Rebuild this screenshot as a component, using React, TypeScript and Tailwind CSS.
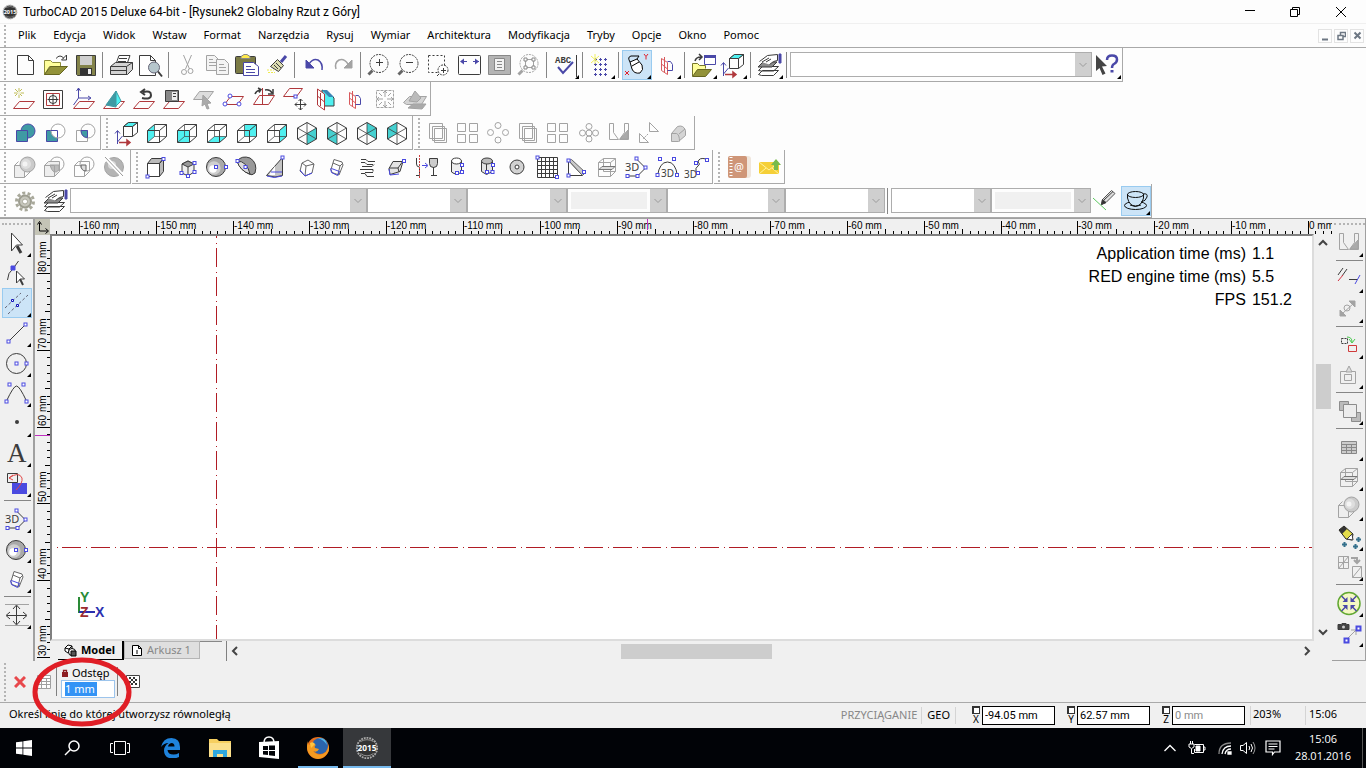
import { useState } from "react";
import type { ReactNode } from "react";

const DARK = "#3c3c3c";
const GREY = "#a3a3a3";
const BLUE = "#4a48a8";
const NODE = "#4a4ae0";
const RED = "#b0383c";
const CYAN = "#4ff0f0";
const TEAL = "#3f9aa4";

const Node = ({ x, y }: { x: number; y: number }) => (
  <rect x={x - 1.5} y={y - 1.5} width="3" height="3" fill="#fff" stroke={NODE} />
);

const cubeFaces: Record<string, string> = {
  left: "M5.500 12.500l7-6v12l-7 6z",
  front: "M5.500 12.500h12v12h-12z",
  bottom: "M5.500 24.500l7-6h12l-7 6z",
  back: "M12.500 6.500h12v12h-12z",
  right: "M17.500 12.500l7-6v12l-7 6z",
};

const Cube = ({ face }: { face: string }) => (
  <>
    <path d={cubeFaces[face]} fill={CYAN} stroke="none" />
    <path d="M5.500 12.500h12v12h-12zM5.500 12.500l7-6h12l-7 6M24.500 6.500v12l-7 6" />
    <path d="M12.500 6.500v12h12M12.500 18.500l-7 6" strokeWidth=".7" />
  </>
);

const isoFaces: Record<string, string> = {
  se: "M15 15.500l9-5.500v11l-9 5.500z",
  sw: "M15 15.500l-9-5.500v11l9 5.500z",
  ne: "M15 4.500l9 5.500v11l-9-5.500z",
  nw: "M15 4.500l-9 5.500v11l9-5.500z",
};

const Iso = ({ face }: { face: string }) => (
  <>
    <path d={isoFaces[face]} fill="#45d0d0" stroke="none" />
    <path d="M15 4.500l9.500 5.500v11l-9.500 5.500-9.500-5.500V10z" />
    <path d="M15 4.500v22M5.500 10l19 11M24.500 10l-19 11" strokeWidth=".8" />
  </>
);

const Plane = () => <path d="M3.500 24.500h15l6-7h-15z" stroke={RED} />;

const Ball = ({ cx, cy, r }: { cx: number; cy: number; r: number }) => (
  <>
    <circle cx={cx} cy={cy} r={r} fill="#a9a9a9" />
    <circle cx={cx - 2} cy={cy + 1} r={r * 0.7} fill="#cfcfcf" stroke="none" />
    <circle cx={cx - 3} cy={cy + 2} r={r * 0.4} fill="#fff" stroke="none" />
  </>
);

const Sheets = (
  <>
    <path d="M4.500 24.500l4-4h16l-5 5h-12zM4.500 20.500l4-4h16l-5 4.500h-12z" fill="#fff" />
    <path d="M4 17l5-5h14l-5 5z" fill="#8c8c8c" />
    <path d="M5.500 11.500l8-6 10-1v6l-4 1-4 3M8 12l7-4M12 12l5-3" fill="#fff" />
    <path d="M25 4h2v9h-2z" fill={BLUE} stroke={BLUE} />
  </>
);

const OriginCube = (
  <>
    <path d="M11.500 8.500h9v10h-9zM11.500 8.500l5-4h9l-5 4M25.500 4.500v10l-5 4" />
    <path d="M11.500 8.500l5-4h9l-5 4z" fill={CYAN} />
    <path d="M5.500 26V13M3 15.500l2.500-3 2.500 3M5.500 24l5-6" stroke={BLUE} />
    <path d="M7 24.500h10M15 22l3 2.500-3 2.500z" stroke={RED} fill={RED} strokeWidth="1.500" />
  </>
);

const RedPlanes = (
  <>
    <path d="M9.500 8.500v12l6 4v-12zM12.500 7v15M9.500 14l6 5" stroke="#d8585c" />
    <path d="M15.500 11.500h3l2 3v6h-5" stroke={BLUE} />
  </>
);

const Lens = ({ grey = false, children }: { grey?: boolean; children?: ReactNode }) => (
  <>
    <circle cx="15" cy="13.500" r="9" stroke={grey ? GREY : DARK} strokeDasharray="2 1" />
    <path d="M8.500 20.500l-4 4" stroke={grey ? GREY : "#666"} strokeWidth="3" />
    {children}
  </>
);

const Solid3D = (
  <g stroke={GREY}>
    <path d="M4.500 13.500h10v12h-10zM14.500 25.500l6-6M4.500 13.500l4-4" fill="#eee" />
    <circle cx="17.500" cy="12.500" r="7.500" fill="#cbcbcb" />
    <circle cx="16" cy="12" r="5" fill="#dedede" stroke="none" />
    <circle cx="15" cy="12" r="2.500" fill="#f4f4f4" stroke="none" />
  </g>
);

const Poly3D = (
  <>
    <text x="3" y="19" fontSize="11" fill={DARK} stroke="none">3D</text>
    <path d="M14.500 7l9 9-8 8h-10" />
    <Node x={14.5} y={6.500} />
    <Node x={23.5} y={15.500} />
    <Node x={15.5} y={24} />
    <Node x={5.500} y={24} />
  </>
);

const SectionBox = (
  <g stroke={GREY}>
    <path d="M6.500 10.500h12v14h-12zM6.500 10.500l5-4h12l-5 4M23.500 6.500v13l-5 5M11.500 6.500v13h12" />
    <path d="M7 17.500l3-3h13l-3 3z" fill="#ddd" stroke="#777" />
  </g>
);

const SmallBox = (
  <>
    <path d="M12 7.500l8 2.500 1 3-4 10-7-2.500-1-3z" fill="#fff" stroke="#666" />
    <path d="M11 11l7 3 3-3M18 14l-2 8" stroke="#666" />
    <path d="M8.500 16.500l1 4 6 3 2-4-8-3" stroke={NODE} />
  </>
);

const Compass = (
  <g stroke={GREY}>
    <path d="M5.500 5.500h4v9l5 7h-9z" />
    <path d="M20.500 5.500h4v16h-9l5-7z" />
    <path d="M16 21l8-9v9z" fill="#aaa" />
  </g>
);

const icons: Record<string, ReactNode> = {
  new: <path d="M7.500 5.500h11l5 5v14h-16zM18.500 5.500v5h5" />,
  open: (
    <>
      <path d="M4.500 24.500v-14h6l2 2h8v4h-11z" fill="#ffff9c" stroke="#8f8f3c" />
      <path d="M4.500 24.500l6-8h17l-8 8z" fill="#93933a" stroke="#666620" />
      <path d="M16 8.500q4-5 8 0M26.500 5v5h-5z" />
    </>
  ),
  save: (
    <>
      <path d="M6.500 5.500h19v20h-18l-1-1z" fill="#83834a" />
      <path d="M10 6h12v9H10z" fill="#cfcfcf" stroke="none" />
      <path d="M10 18h12v7H10z" fill="#333" stroke="none" />
      <path d="M18 19h3v5h-3z" fill="#eee" stroke="none" />
    </>
  ),
  print: (
    <>
      <path d="M10 14l3-8.500h11l-3 8.500" fill="#fff" />
      <path d="M13 8.500h8M12 11.500h8" />
      <path d="M4.500 16.500l5-4h17v7l-5 5h-17z" fill="#d2d2d2" />
      <path d="M4.500 16.500h16l6-4M4.500 20.500h16M20.500 16.500v8" />
    </>
  ),
  preview: (
    <>
      <path d="M3.500 5.500h11l5 5v15h-16zM14.500 5.500v5h5" fill="#fff" />
      <circle cx="18" cy="17.500" r="5.500" fill="#b6c6cc" stroke="#667" />
      <path d="M22 21.500l4 5" strokeWidth="2" />
    </>
  ),
  cut: (
    <g stroke={GREY}>
      <path d="M11.500 5l6 14M19.500 5l-6 14" />
      <circle cx="12" cy="22" r="2.500" />
      <circle cx="18.500" cy="21" r="2.500" />
    </g>
  ),
  copy: (
    <g stroke={GREY}>
      <path d="M4.500 5.500h8l4 4v11h-12z" fill="#f4f4f4" />
      <path d="M7 9.500h4M7 12.500h7M7 15.500h7" />
      <path d="M14.500 9.500h8l4 4v11h-12z" fill="#f4f4f4" />
      <path d="M17 14.500h5M17 17.500h7M17 20.500h7" />
    </g>
  ),
  paste: (
    <>
      <rect x="3.500" y="6.500" width="20" height="17" rx="1" fill="#7b7b45" />
      <path d="M9 6.500l3-2h3l3 2v2H9z" fill="#ffe94a" stroke="#888" />
      <path d="M11.500 12.500h10l5 4v9h-15z" fill="#fff" stroke={BLUE} />
      <path d="M14 16.500h5M14 19.500h9M14 22.500h9" stroke={BLUE} />
    </>
  ),
  brush: (
    <>
      <path d="M19 12l5-6" stroke={BLUE} strokeWidth="3" />
      <path d="M15.500 9.500l6 6-5 6-8-5z" fill="#dcdcb0" />
      <path d="M14 13l5 5M12 15l4 4" />
      <path d="M5 20h7M6 22.500h7" stroke="#eeea50" strokeDasharray="2 1" />
    </>
  ),
  undo: (
    <g stroke={BLUE}>
      <path d="M11 14q4-6 9-4 5 3 4 10" strokeWidth="1.500" />
      <path d="M8 10v8h8z" fill={BLUE} />
    </g>
  ),
  redo: (
    <g stroke={GREY}>
      <path d="M20 14q-4-6-9-4-5 3-3 9" strokeWidth="1.500" />
      <path d="M24 10v8h-8z" fill={GREY} />
    </g>
  ),
  zoomIn: <Lens><path d="M12 12.500h7M15.500 9v7" /></Lens>,
  zoomOut: <Lens><path d="M12 12.500h7" /></Lens>,
  zoomWindow: (
    <>
      <path d="M4.500 5.500h16v17h-16z" strokeDasharray="2 2" />
      <circle cx="19" cy="20" r="5" fill="#fff" strokeDasharray="2 1" />
      <path d="M17 20.500h5M19.500 18v5M15 24l-2 2" />
    </>
  ),
  extents: (
    <>
      <rect x="4.500" y="5.500" width="22" height="19" rx="1" />
      <path d="M7 11.500h6M25 11.500h-6" stroke={BLUE} />
      <path d="M6 11.500l4-3v6zM25 11.500l-4-3v6z" fill={BLUE} stroke="none" />
    </>
  ),
  page: (
    <g stroke="#888">
      <path d="M4.500 5.500h22v19h-22z" fill="#b4b4b4" />
      <path d="M10.500 8.500h10v12h-10z" fill="#f2f2f2" />
      <path d="M13 11.500h5M13 14.500h5M13 17.500h5" />
    </g>
  ),
  zoomSelection: (
    <Lens grey>
      <path d="M11.500 9.500h8v8h-8z" stroke={GREY} />
      <path d="M10 8h3v3h-3zM18 8h3v3h-3zM10 16h3v3h-3zM18 16h3v3h-3z" stroke="#888" fill="#fff" />
    </Lens>
  ),
  spelling: (
    <>
      <text x="5" y="13" fontSize="9" fontWeight="700" fill={DARK} stroke="none" className="font-['Liberation_Mono',monospace]">ABC</text>
      <path d="M8 17l5 6 10-11" stroke={BLUE} strokeWidth="2" />
      <path d="M26.500 5v22" />
    </>
  ),
  grid: (
    <>
      {[9, 14, 19, 24].map((y) => (
        <path key={y} d={`M8 ${y}.500h3M13 ${y}.500h3M18 ${y}.500h3M9.500 ${y - 1}v3M14.500 ${y - 1}v3M19.500 ${y - 1}v3`} stroke={BLUE} />
      ))}
      <path d="M5 6l8 7M5 13l8-7M9 4v10" stroke="#f2f060" />
    </>
  ),
  noSnap: (
    <>
      <path d="M8 12l7-3 5 6q2 5-2 8-6 1-8-4z" fill="#fff" stroke="#000" />
      <path d="M10 16l7-4M8 12q-3-5 1-6h8l-2 3" stroke="#000" />
      <path d="M3 21l4 4M7 21l-4 4M22 4l2 2.500 2-2.500M24 6.500v3" stroke="#e0202c" />
    </>
  ),
  workplane: RedPlanes,
  openLayout: (
    <>
      <path d="M4.500 26V13.500h5l2 2h6v3" fill="#ffff9c" stroke="#77772c" />
      <path d="M4.500 26.500l5-7h14l-6 7z" fill="#93933a" stroke="#666620" />
      <path d="M16.500 5.500h11v9h-11z" fill="#fff" stroke={BLUE} />
      <path d="M16 5h12v3H16z" fill={BLUE} stroke="none" />
      <path d="M7 11q1-4 6-4M11 4l3 3-3 3" strokeWidth="1.500" />
    </>
  ),
  originCube: OriginCube,
  sheets: Sheets,
  help: (
    <>
      <path d="M4 5l11 11-5 .500 3.500 7-3 1.500-3-7L4 21z" fill="#444" stroke="none" />
      <path d="M15 10q0-4.500 5-4.500t5 4q0 3-3 4.500-2 1-2 4" stroke={BLUE} strokeWidth="2.500" />
      <path d="M18.500 20h3v2.500h-3z" fill={BLUE} stroke="none" />
    </>
  ),

  planeNew: (
    <>
      <Plane />
      <path d="M9 4v10M4 9h10M5 5l7 7M12 5l-7 7" stroke="#c0bd58" />
      <path d="M9 7v4M7 9h4" stroke="#fff" />
    </>
  ),
  planeView: (
    <>
      <path d="M3.500 6.500h19v18h-19z" />
      <path d="M6.500 9.500h13v12h-13z" stroke={RED} />
      <circle cx="13" cy="15.500" r="4" />
      <path d="M13 10v11M7.500 15.500h11" />
    </>
  ),
  planeAxes: (
    <>
      <Plane />
      <path d="M8.500 4v10h12M8.500 14l-5 7M6.500 7l2-3 2 3M18 12l3 2-3 2" stroke={BLUE} />
    </>
  ),
  planeFacet: (
    <>
      <Plane />
      <path d="M6 21l10-14v16z" fill={TEAL} stroke={TEAL} />
      <path d="M16 7l5 10-5 5z" fill={CYAN} stroke={TEAL} />
    </>
  ),
  planeBack: (
    <>
      <Plane />
      <path d="M12 14q9 2 9-3t-8-3M15 5l-4 3 4 3" strokeWidth="2" />
    </>
  ),
  planeNamed: (
    <>
      <Plane />
      <path d="M5.500 6.500h13v11h-13z" fill="#888" />
      <path d="M12 8h5v8h-5z" fill="#eee" stroke="none" />
      <path d="M13 9.500h3M13 12.500h3" />
    </>
  ),
  planeSelect: (
    <g stroke={GREY}>
      <path d="M3.500 15.500l6-8h14l-6 8z" fill="#ddd" />
      <path d="M13 11l8 8-4 .500 2 5-2 .500-2-5-3 2z" fill="#aaa" />
    </g>
  ),
  planePoints: (
    <>
      <path d="M4.500 20.500h13l6-8h-13z" stroke={RED} />
      <circle cx="10" cy="12" r="2" fill="#fff" stroke={NODE} />
      <circle cx="5" cy="20" r="2" fill="#fff" stroke={NODE} />
      <circle cx="19" cy="20" r="2" fill="#fff" stroke={NODE} />
    </>
  ),
  planeRotate: (
    <>
      <path d="M3.500 20.500h15l6-9h-15z" stroke={RED} />
      <path d="M12.500 4v16" stroke={RED} />
      <path d="M5 10q1-3 5-4M15 6q5-1 7 3M8 4l3 1.500-2 3M23 5v5h-5" strokeWidth="1.500" />
    </>
  ),
  planeMove: (
    <>
      <path d="M3.500 12.500h13l6-8h-13z" stroke={RED} />
      <Node x={15.500} y={12.500} />
      <path d="M20.500 15v11M15 20.500h11M18.500 17l2-2 2 2M18.500 24l2 2 2-2M17 18.500l-2 2 2 2M24 18.500l2 2-2 2" />
    </>
  ),
  planeObject: (
    <>
      <path d="M12 6l7 3 5 5v8H12z" fill={CYAN} />
      <path d="M12 6h5l7 7h-5z" fill="#3a86b4" stroke="none" />
      <path d="M7.500 5v16l7 5V10z" fill="#fff" stroke={RED} />
      <path d="M10.500 9v13M7.500 12l7 6" stroke={RED} />
    </>
  ),
  planeFaces: RedPlanes,
  fit: (
    <g stroke={GREY}>
      <path d="M6.500 6.500h17v17h-17z" strokeDasharray="3 1" />
      <path d="M15 7v6M15 17v6M7 15h6M17 15h6M13 9l2-2 2 2M13 21l2 2 2-2M9 13l-2 2 2 2M21 13l2 2-2 2M9 9l3 3M21 9l-3 3M9 21l3-3M21 21l-3-3" />
    </g>
  ),
  render: (
    <g stroke={GREY}>
      <path d="M3.500 18.500l6-6h17l-5 8h-15z" fill="#d4d4d4" />
      <path d="M9 17l6-10 6 7-4 4z" fill="#bbb" />
      <path d="M8 24l5-4h13l-4 5z" fill="#aaa" />
    </g>
  ),

  union: (
    <g stroke={BLUE}>
      <circle cx="18" cy="13" r="7" fill={TEAL} />
      <path d="M6.500 12.500h11v11h-11z" fill={TEAL} />
    </g>
  ),
  subtract: (
    <>
      <path d="M6.500 12.500h11v11h-11z" fill={TEAL} stroke={BLUE} />
      <circle cx="18" cy="13" r="7" fill="#fff" stroke={GREY} />
      <path d="M11 12.500h6.500v7" stroke={BLUE} />
    </>
  ),
  intersect: (
    <>
      <path d="M6.500 12.500h11v11h-11z" stroke={GREY} />
      <circle cx="18" cy="13" r="7" stroke={GREY} />
      <path d="M11 12.500h6.500v7q-6 0-6.500-7z" fill={TEAL} stroke={BLUE} />
    </>
  ),
  cubeLeft: <Cube face="left" />,
  cubeFront: <Cube face="front" />,
  cubeBottom: <Cube face="bottom" />,
  cubeBack: <Cube face="back" />,
  cubeRight: <Cube face="right" />,
  isoSE: <Iso face="se" />,
  isoSW: <Iso face="sw" />,
  isoNE: <Iso face="ne" />,
  isoNW: <Iso face="nw" />,
  copyStack: <path d="M5.500 5.500h13v15h-13zM8.500 8.500h12v14h-12zM10.500 10.500h12v14h-12z" stroke={GREY} />,
  copyArray: <path d="M3.500 5.500h8v8h-8zM15.500 5.500h8v8h-8zM3.500 16.500h8v8h-8zM15.500 16.500h8v8h-8z" stroke={GREY} />,
  copyRadial: (
    <g stroke={GREY}>
      <circle cx="14" cy="7.500" r="3" /><circle cx="14" cy="22" r="3" /><circle cx="6.500" cy="14.500" r="3" /><circle cx="21.500" cy="14.500" r="3" />
    </g>
  ),
  copyFlower: (
    <g stroke={GREY}>
      <circle cx="15" cy="8.500" r="3" /><circle cx="15" cy="21" r="3" /><circle cx="8.500" cy="15" r="3" /><circle cx="21.500" cy="15" r="3" /><circle cx="15" cy="15" r="3" />
    </g>
  ),
  compass: Compass,
  mirror: (
    <g stroke={GREY}>
      <path d="M15.500 4.500v9h9zM5.500 15.500v9h9z" />
      <path d="M14 16l-5 5" strokeDasharray="2 1" />
    </g>
  ),
  bevel: (
    <g stroke={GREY}>
      <path d="M7.500 15.500l6-7q6-2 8 4v5l-7 6h-7z" fill="#d5d5d5" />
      <path d="M7.500 15.500h5q3 1 3 8M15 16l6-5" />
    </g>
  ),

  solid: Solid3D,
  solidCut: (
    <g stroke={GREY}>
      <circle cx="17" cy="12" r="7" />
      <path d="M4.500 13.500l4-4h11v10l-5 5h-10z" fill="#eee" />
      <path d="M10 13h9v5q-6 6-9-5z" fill="#bbb" />
      <path d="M4.500 13.500h10v11" />
    </g>
  ),
  solidCommon: (
    <g stroke={GREY}>
      <circle cx="17" cy="12" r="7" />
      <path d="M4.500 13.500l4-4h11v10l-5 5h-10zM4.500 13.500h10v11" />
      <path d="M11 13h5v6q-5 0-5-6z" fill="#ddd" stroke="#666" />
    </g>
  ),
  slice: (
    <>
      <circle cx="14" cy="15" r="9.500" fill="#b4b4b4" stroke={GREY} />
      <circle cx="12" cy="13" r="4" fill="#d8d8d8" stroke="none" />
      <path d="M5 5l18 19" stroke="#fff" strokeWidth="4" />
      <path d="M5 5l18 19" stroke="#999" />
    </>
  ),
  box: (
    <>
      <path d="M5.500 11.500h12v13h-12z" fill="#fff" />
      <path d="M5.500 11.500l4-5h12l-4 5zM17.500 11.500l4-5v13l-4 5z" fill="#bbb" />
      <Node x={5.500} y={24.500} /><Node x={21.500} y={7} />
    </>
  ),
  boxCenter: (
    <>
      <path d="M10 12l6-3 6 3v8l-6 4-6-3z" fill="#eee" />
      <path d="M10 12l6-3 6 3-6 3z" fill="#999" />
      <path d="M16 15v9" />
      <Node x={9.500} y={21} /><Node x={16} y={24} /><Node x={22.500} y={20} /><Node x={22.500} y={11} />
    </>
  ),
  sphere: (
    <>
      <Ball cx={14} cy={15} r={9.500} />
      <Node x={14} y={15} /><Node x={24} y={15} />
    </>
  ),
  hemisphere: (
    <>
      <path d="M5 9q5-6 13-3 8 5 5 15-3 3-6 1-9-4-12-13z" fill="#999" />
      <path d="M5 9q10 0 13 13-10-3-13-13z" fill="#ddd" />
      <Node x={5.500} y={9} /><Node x={13.500} y={15} />
    </>
  ),
  cone: (
    <>
      <path d="M4.500 23.500l16-18v18q-7 3-16 0z" fill="#c4c4c4" />
      <path d="M13 14l-6 9h6z" fill="#fff" stroke="none" />
      <path d="M5 24q7 3 15 0M9 20h11" stroke={NODE} />
      <Node x={20.500} y={5.500} />
    </>
  ),
  prism: (
    <>
      <path d="M10 11l6-3 6 4-2 9-7 3-5-5z" fill="#fff" stroke="#666" />
      <path d="M10 11l4 3 8-2M14 14l-1 10" stroke="#666" />
      <path d="M8 18l5 6 7-3" stroke={NODE} />
    </>
  ),
  smallBox: SmallBox,
  pipes: <path d="M9 7.500h5l2 2h7M9 10.500h4l2 2h6M10 14.500h10l2-2M8 17.500h13v2M9 21.500h4l2 3h7M13 20.500h8" />,
  slab: (
    <>
      <path d="M11 9.500h10l-3 10-10 3-1-6z" fill="#e4e4e4" />
      <path d="M7 16h9l5-7M16 16l1 4" />
      <path d="M7 17l1 6 9-1" stroke={NODE} />
      <Node x={22} y={9} />
    </>
  ),
  revolve: (
    <>
      <path d="M4.500 6v6q0 3 3 3v8.500H4" />
      <path d="M17.500 6.500h8v5q0 4-4 4t-4-4zM21.500 15v8M19 23.500h6" fill="#ccc" />
      <path d="M7.500 3v24" stroke="#d04040" strokeDasharray="2 1" />
      <path d="M10 13.500h5M13 11l3 2.500-3 2.500" stroke={NODE} />
    </>
  ),
  cylinder: (
    <>
      <path d="M9.500 9v11q5 4 10 0V9" fill="#eee" />
      <ellipse cx="14.500" cy="9" rx="5" ry="3" fill="#fff" />
      <Node x={20} y={13} /><Node x={20} y={20} /><Node x={15} y={21} />
    </>
  ),
  tube: (
    <>
      <path d="M9.500 9.500v10l5 3 6-3v-10" fill="#e4e4e4" />
      <ellipse cx="15" cy="9" rx="5.500" ry="3" fill="#bbb" />
      <path d="M14.500 12v10" />
      <Node x={21} y={13} /><Node x={20.500} y={20} /><Node x={15} y={20} />
    </>
  ),
  torus: (
    <>
      <circle cx="15" cy="15" r="7" fill="#d2d2d2" />
      <circle cx="15" cy="15" r="2" fill="#fff" />
    </>
  ),
  mesh: (
    <>
      <path d="M5.500 5.500h20v20h-20zM9.500 5v20M13.500 5v20M17.500 5v20M21.500 5v20M5 9.500h20M5 13.500h20M5 17.500h20M5 21.500h20" />
      <Node x={5.500} y={5.500} /><Node x={25} y={25} />
    </>
  ),
  wedge: (
    <>
      <path d="M6.500 8.500v15h14z" fill="#fff" />
      <path d="M6.500 8.500l3-1 14 13-3 3z" fill="#c9c9c9" stroke="#666" />
      <Node x={6.500} y={8.500} /><Node x={6.500} y={23.500} /><Node x={22} y={20} />
    </>
  ),
  sectionBox: SectionBox,
  poly3d: Poly3D,
  arc3d: (
    <>
      <path d="M5.500 24q2-14 10-14t10 14" />
      <text x="9" y="25" fontSize="10" fill={DARK} stroke="none">3D</text>
      <Node x={8} y={7} /><Node x={22} y={7} /><Node x={5.500} y={23} /><Node x={25} y={23} />
    </>
  ),
  spline3d: (
    <>
      <path d="M14 19q-1-3 2-5t0-4q1-5 8-3" />
      <text x="2" y="26" fontSize="10" fill={DARK} stroke="none">3D</text>
      <Node x={14} y={11} /><Node x={25} y={8} /><Node x={16} y={21} />
    </>
  ),
  addressBook: (
    <g stroke="none">
      <rect x="4" y="4" width="23" height="22" rx="3" fill="#f0e6dc" />
      <rect x="4" y="4" width="19" height="22" rx="2" fill="#cf9678" />
      <path d="M7 5v20" stroke="#fff" strokeDasharray="1 2" strokeWidth="3" />
      <text x="10" y="19" fontSize="11" fill="#fff">@</text>
    </g>
  ),
  mailUp: (
    <>
      <path d="M5 10h20v12H5z" fill="#f5cf37" stroke="none" />
      <path d="M5 10l10 8 10-8M5 22l7-6M25 22l-7-6" stroke="#fff3a0" />
      <path d="M22 7l5 6h-3v5h-4v-5h-3z" fill="#78bb4c" stroke="none" />
    </>
  ),

  gear: (
    <>
      <circle cx="15" cy="15.500" r="8.500" stroke="#a8a89a" strokeWidth="3" strokeDasharray="3 2.300" />
      <circle cx="15" cy="15.500" r="6" fill="#c7c7bd" stroke="#9d9d90" strokeWidth="2" />
      <circle cx="15" cy="15.500" r="2.500" fill="#fff" stroke="#a8a89a" />
    </>
  ),
  pencil: (
    <>
      <path d="M2 12l13 12" stroke="#5cc860" />
      <path d="M10.500 18.500l1-5 9-9 3.500 3-9 9z" fill="#ddd" stroke="#555" />
      <path d="M10.500 18.500l1-5 3.500 3zM13 14l9-8.500" fill="#333" />
    </>
  ),
  cup: (
    <g stroke="#111">
      <ellipse cx="14.500" cy="19.500" rx="11" ry="4" />
      <path d="M6.500 8v4q2 8 8 8t8-8V8" fill="#cce4f7" />
      <ellipse cx="14.500" cy="8.500" rx="8" ry="3" />
      <path d="M22 8q5-1 4 3t-6 5M9 19q5 3 11 0" />
    </g>
  ),

  arrow: (
    <>
      <path d="M9.500 5v18l5-6h6z" fill="#fff" />
      <path d="M15 18l4 7" strokeWidth="3" />
    </>
  ),
  nodeEdit: (
    <>
      <path d="M5.500 22q0-7 6-12l5-7" />
      <path d="M9 8h4v4H9z" fill={NODE} stroke={NODE} />
      <path d="M14.500 13v12l4-4h4z" fill="#fff" />
      <path d="M18 21l3 6" strokeWidth="2" />
    </>
  ),
  parallel: (
    <>
      <path d="M3 20L19 5M6 26L26 7" strokeDasharray="3 2" stroke="#667" />
      <path d="M9.500 11.500h2v2h-2zM14.500 16.500h2v2h-2z" stroke="#1010b8" fill="#fff" />
    </>
  ),
  line: (
    <>
      <path d="M6.500 23.500l17-17" />
      <Node x={6.500} y={23.500} /><Node x={23.500} y={6.500} />
    </>
  ),
  circle: (
    <>
      <circle cx="14.500" cy="15.500" r="10" />
      <Node x={14.500} y={15.500} /><Node x={24.500} y={15.500} />
    </>
  ),
  arc: (
    <>
      <path d="M4.500 23q7-15 10-15t10 15" />
      <Node x={7.500} y={6.500} /><Node x={21.500} y={6.500} /><Node x={4.500} y={23.500} /><Node x={24.500} y={23.500} />
    </>
  ),
  point: <circle cx="15" cy="14" r="2" fill={DARK} stroke="none" />,
  text: <text x="5" y="24" fontSize="27" fill={DARK} stroke="none" className="font-['Liberation_Serif',serif]">A</text>,
  substitute: (
    <>
      <path d="M5.500 5.500h10v9h-10z" />
      <path d="M10 15h15v11H10z" fill={NODE} stroke="none" />
      <path d="M7 10q10-7 13 0 1 5-6 12M11 7l-4 3 4 2" stroke="#e04848" />
    </>
  ),
  ball: (
    <>
      <Ball cx={14} cy={16} r={9.500} />
      <Node x={14} y={16} /><Node x={24} y={16} />
    </>
  ),
  move: (
    <>
      <path d="M3 4.500h24M3 25.500h24" stroke={GREY} />
      <path d="M14.500 6v18M5 15.500h19M11 9l3.500-4 3.500 4M11 21l3.500 4 3.500-4M8 12l-4 3.500 4 3.500M21 12l4 3.500-4 3.500" />
    </>
  ),

  trim: (
    <>
      <path d="M4 11l5-7M8 12l5-7" />
      <path d="M4 17l5-6" stroke="#d03040" />
      <path d="M15 15.500h8" />
      <path d="M21 20l5-9" stroke={NODE} />
    </>
  ),
  extend: (
    <g stroke={GREY}>
      <path d="M8 20l12-11" />
      <path d="M6 16v6h6zM15 7h6v6z" fill={GREY} />
      <circle cx="13" cy="14" r="3" />
    </g>
  ),
  group: (
    <>
      <path d="M7.500 8.500h6v5h-6z" strokeDasharray="2 1" />
      <path d="M13 7q5 0 5 5M15 9l3 4 3-4" stroke="#45c84a" />
      <path d="M14.500 15.500h8v6h-8z" stroke="#d03a3a" />
    </>
  ),
  lockGroup: (
    <g stroke={GREY}>
      <path d="M6.500 11.500h15v12h-15zM10.500 14.500h7v6h-7z" />
      <path d="M12 12l3-6 3 6z" fill="#ddd" />
    </g>
  ),
  arrange: (
    <g stroke="#8c8c8c">
      <path d="M5.500 5.500h9v9h-9zM17.500 16.500h9v9h-9z" fill="#bbb" />
      <path d="M9.500 8.500h13v13h-13z" fill="#ececec" />
    </g>
  ),
  table: (
    <g stroke="#888">
      <path d="M7.500 9.500h15v12h-15z" fill="#ccc" />
      <path d="M7 12.500h16M7 15.500h16M7 18.500h16M12.500 12v9M17.500 12v9" />
    </g>
  ),
  marker: (
    <>
      <path d="M5 8l5-4 9 8-1 6-6-1z" fill="#e3dc4a" stroke="#222" />
      <path d="M5 8l5-4 3 3-5 5z" fill="#333" stroke="none" />
      <path d="M13 17l5-5 1 6z" fill="#fff" />
      <path d="M8 22.500h5M10.500 20v5M22 17.500h5M24.500 15v5M19 24.500h5M21.500 22v5" stroke="#35708c" strokeWidth="2" />
    </>
  ),
  blocks: (
    <g stroke={GREY}>
      <path d="M4.500 4.500h10v12h-10zM9.500 4.500v12M4.500 10.500h10M4.500 16.500l10-12M18.500 14.500h9v11h-9zM18.500 25.500l9-11" />
      <path d="M17 6h6v4M20 8l3 3 3-3" strokeWidth="2" />
    </g>
  ),
  collapse: (
    <>
      <circle cx="15" cy="15.500" r="11" fill="#f4f8c4" stroke="#62a832" strokeWidth="1.500" />
      <path d="M7.500 8l5 5M22.500 8l-5 5M7.500 23l5-5M22.500 23l-5-5" stroke={BLUE} strokeWidth="1.500" />
      <path d="M13.500 9v5h-5zM16.500 9v5h5zM13.500 22v-5h-5zM16.500 22v-5h5z" fill={BLUE} stroke="none" />
    </>
  ),
  camera: (
    <>
      <path d="M4 6.500h3l1-1h4l1 1h2v5H4z" fill="#444" />
      <circle cx="9.500" cy="9" r="1.500" fill="#ccc" stroke="none" />
      <path d="M14 20l8-8M17 12h5v5" stroke={GREY} />
      <path d="M10.500 20.500h4v4h-4zM22.500 8.500h4v4h-4z" fill="#fff" stroke={NODE} strokeWidth="2" />
    </>
  ),
};

// "|" marks a separator, a trailing "*" a button with a flyout corner
const standardBar = [
  "new", "open", "save", "|", "print", "preview", "|", "cut", "copy", "paste", "brush", "|", "undo", "redo", "|",
  "zoomIn", "zoomOut", "zoomWindow", "extents", "page", "zoomSelection", "|", "spelling*", "|", "grid*", "|",
  "noSnap*", "workplane*", "|", "openLayout*", "originCube*", "|", "sheets*", "|",
];
const planeBar = [
  "planeNew", "planeView", "planeAxes", "planeFacet", "planeBack", "planeNamed", "planeSelect", "planePoints",
  "planeRotate", "planeMove", "planeObject", "planeFaces", "fit", "render",
];
const booleanBar = ["union", "subtract", "intersect"];
const viewBar = [
  "originCube", "cubeLeft", "cubeFront", "cubeBottom", "cubeBack", "cubeRight", "isoSE", "isoSW", "isoNE", "isoNW",
];
const copyBar = ["copyStack", "copyArray", "copyRadial", "copyStack", "copyArray", "copyFlower", "compass", "mirror", "bevel"];
const solidBar = ["solid", "solidCut", "solidCommon", "slice"];
const shapeBar = [
  "box", "boxCenter", "sphere", "hemisphere", "cone", "prism", "smallBox", "pipes", "slab", "revolve", "cylinder",
  "tube", "torus", "mesh", "wedge", "sectionBox", "poly3d", "arc3d", "spline3d",
];
const leftBar = [
  "arrow*", "nodeEdit", "parallel*", "line*", "circle*", "arc*", "point*", "text*", "substitute*", "|", "poly3d*",
  "ball*", "smallBox*", "|", "move*",
];
const rightBar = [
  "compass*", "|", "trim*", "extend*", "|", "group*", "lockGroup*", "|", "arrange*", "|", "table*", "sectionBox*",
  "solid*", "marker*", "blocks*", "|", "collapse*", "camera*",
];

const menus = [
  "Plik", "Edycja", "Widok", "Wstaw", "Format", "Narzędzia", "Rysuj", "Wymiar", "Architektura", "Modyfikacja",
  "Tryby", "Opcje", "Okno", "Pomoc",
];

const ToolButton = ({ id, active = false }: { id: string; active?: boolean }) => {
  const name = id.replace("*", "");
  return (
    <button
      type="button"
      aria-label={name}
      className={`block size-[30px] shrink-0 ${active ? "bg-[#cce4f7] outline -outline-offset-1 outline-[#99cbf0]" : ""}`}
    >
      <svg viewBox="0 0 30 30" className="size-[30px]" fill="none" stroke={DARK}>
        {icons[name]}
        {id.endsWith("*") && <path d="M29 25v4h-4z" fill="#000" stroke="none" />}
      </svg>
    </button>
  );
};

const Tools = ({ items, active, vertical = false }: { items: string[]; active?: string; vertical?: boolean }) => (
  <>
    {items.map((item, i) =>
      item === "|" ? (
        <span
          key={i}
          className={vertical ? "mx-0.5 mt-[2px] mb-[3px] block border-t border-[#868686]" : "mr-[3px] ml-[2px] h-[26px] border-l border-[#868686]"}
        />
      ) : (
        <ToolButton key={i} id={item} active={active !== undefined && item.startsWith(active)} />
      )
    )}
  </>
);

const ToolBar = ({ children }: { children: ReactNode }) => (
  <div role="toolbar" className="flex h-[34px] items-center border-r border-b border-[#a9a9a9]">
    <span className="mr-1 ml-1 h-[30px] border-l-2 border-dotted border-[#b4b4b4]" />
    {children}
  </div>
);

const Combo = ({ label, className, muted = false }: { label: string; className: string; muted?: boolean }) => (
  <div className={`flex h-[25px] border border-[#adadad] ${className}`}>
    <select aria-label={label} disabled className={`min-w-0 flex-1 appearance-none ${muted ? "m-[3px] bg-[#f0f0f0]" : "bg-white"}`} />
    <span className="flex w-4 items-center justify-center bg-[#cfcfcf]">
      <svg viewBox="0 0 8 6" className="h-1.5 w-2" fill="none" stroke="#9a9a9a"><path d="M.5 1L4 4.500 7.500 1" /></svg>
    </span>
  </div>
);

const STEP = 7.68;

const HorizontalRuler = () => (
  <svg className="block h-[15px] w-full bg-[#f0f0f0]" shapeRendering="crispEdges">
    {Array.from({ length: 260 }, (_, i) => {
      const mm = i - 163;
      const x = Math.round(29 + (i - 3) * STEP);
      const major = mm % 10 === 0;
      const top = major ? 2 : mm % 5 === 0 ? 10 : 12;
      return (
        <g key={i}>
          <rect x={x} y={top} width="1" height={15 - top} />
          {major && mm <= 0 && <text x={x + 1} y="10" fontSize="10">{`${mm} mm`}</text>}
        </g>
      );
    })}
    <rect x="597" y="0" width="1" height="11" fill="#c030c0" />
  </svg>
);

const VerticalRuler = () => (
  <div className="relative min-h-0 flex-1">
    <svg className="absolute inset-0 size-full bg-[#f0f0f0]" shapeRendering="crispEdges">
      {Array.from({ length: 140 }, (_, i) => {
        const mm = 83 - i;
        const y = Math.round(38 + (i - 3) * STEP);
        const major = mm % 10 === 0;
        const left = major ? 2 : mm % 5 === 0 ? 10 : 12;
        return (
          <g key={i}>
            <rect x={left} y={y} width={15 - left} height="1" />
            {major && mm >= 30 && (
              <text fontSize="10" transform={`translate(11 ${y - 1}) rotate(-90)`}>{`${mm} mm`}</text>
            )}
          </g>
        );
      })}
      <rect x="0" y="200" width="15" height="1" fill="#c030c0" />
    </svg>
  </div>
);

const Drawing = () => (
  <svg className="absolute inset-0 size-full" fill="none">
    <g stroke="#b01c24" shapeRendering="crispEdges">
      <line x1="164.500" y1="0" x2="164.500" y2="100%" strokeDasharray="19 5 1 4" strokeDashoffset="17" />
      <line x1="5" y1="311.500" x2="100%" y2="311.500" strokeDasharray="1 4 19 5" />
    </g>
    <path d="M27 361v16" stroke="#2a8a36" strokeWidth="2" />
    <path d="M27 376h16" stroke="#2a30b0" strokeWidth="2" />
    <g fontSize="14" fontWeight="700" className="font-['Liberation_Sans',sans-serif]">
      <text x="28" y="366" fill="#2a8a36">Y</text>
      <text x="28" y="381" fill="#9c2c30">Z</text>
      <text x="43" y="381" fill="#2a30b0">X</text>
    </g>
  </svg>
);

const stats = [
  ["Application time (ms)", "1.1"],
  ["RED engine time (ms)", "5.5"],
  ["FPS", "151.2"],
];

const Chevron = ({ className }: { className: string }) => (
  <svg viewBox="0 0 10 10" className={`size-2.5 ${className}`} fill="none" stroke="#444" strokeWidth="2"><path d="M1 7l4-4 4 4" /></svg>
);

const Coordinate = ({ axis, value, muted = false }: { axis: string; value: string; muted?: boolean }) => {
  const [text, setText] = useState(value);
  return (
    <div className="flex gap-0.5">
      <div className="flex flex-col items-center">
        <input type="checkbox" aria-label={`Zablokuj ${axis}`} className="size-2 appearance-none border border-l-2 border-t-2 border-[#333] bg-white" />
        <label htmlFor={`axis-${axis}`} className="text-[10px] leading-[11px]">{axis}</label>
      </div>
      <input
        id={`axis-${axis}`}
        value={text}
        onChange={(e) => setText(e.target.value)}
        className={`h-[19px] w-[73px] border border-black bg-white px-0.5 font-['Roboto',sans-serif] text-[11px] ${muted ? "text-[#8a8a8a]" : ""}`}
      />
    </div>
  );
};

const Badge = ({ className }: { className: string }) => (
  <svg viewBox="0 0 26 26" className={className}>
    <circle cx="13" cy="13" r="11" fill="#333" stroke="#aaa" strokeWidth="2" strokeDasharray="2 1" />
    <path d="M6 19q7 5 14 0M6 6q7-4 14 0" stroke="#999" fill="none" />
    <text x="13" y="16" textAnchor="middle" fontSize="9" fontWeight="700" fill="#fff">2015</text>
  </svg>
);

const TaskButton = ({ label, className = "", children }: { label: string; className?: string; children: ReactNode }) => (
  <button type="button" aria-label={label} className={`flex h-10 w-12 items-center justify-center ${className}`}>
    {children}
  </button>
);

const TaskBar = () => (
  <footer className="flex h-10 items-center bg-[#010307] text-white">
    <div className="flex">
      <TaskButton label="Start">
        <svg viewBox="0 0 16 16" className="size-4" fill="#fff"><path d="M0 2.300l6.500-.900v6.200H0zM7.300 1.300L16 0v7.600H7.300zM0 8.400h6.500v6.200L0 13.700zM7.300 8.400H16V16l-8.700-1.300z" /></svg>
      </TaskButton>
      <TaskButton label="Szukaj">
        <svg viewBox="0 0 18 18" className="size-[18px]" fill="none" stroke="#fff" strokeWidth="1.500"><circle cx="11" cy="7" r="5" /><path d="M7.500 10.500L2 16" /></svg>
      </TaskButton>
      <TaskButton label="Widok zadań">
        <svg viewBox="0 0 20 16" className="h-4 w-5" fill="none" stroke="#fff"><path d="M4.500 1.500h11v13h-11zM3 3.500H.500v9H3M17 3.500h2.500v9H17" /></svg>
      </TaskButton>
    </div>
    <div className="ml-[3px] flex gap-px">
      <TaskButton label="Edge">
        <svg viewBox="0 0 20 20" className="size-5" fill="#1f83dc"><path d="M0 9Q2 0 10.500 0 19 .500 19 9v3H6.500q.500 4.500 6 4.500 3 0 5.500-1.500v4q-3 1.500-7 1.500Q3 20 3 12.500 3 8 7.500 5 3 5 0 9zM7 8.500h6.500Q13.500 5 10.500 5 7.500 5.500 7 8.500z" /></svg>
      </TaskButton>
      <TaskButton label="Eksplorator plików">
        <svg viewBox="0 0 22 18" className="h-[18px] w-[22px]"><path d="M0 0h8l2 2h12v16H0z" fill="#f6cf60" /><path d="M0 4h22v14H0z" fill="#fbe08c" /><path d="M4 18v-7h14v7h-4v-3H8v3z" fill="#2fa9e0" /></svg>
      </TaskButton>
      <TaskButton label="Sklep">
        <svg viewBox="0 0 22 24" className="h-6 w-[22px]"><path d="M1 6l20-1v18L1 21z" fill="#fff" /><path d="M6 7q0-6 5-6t5 6" fill="none" stroke="#fff" strokeWidth="1.500" /><path d="M5 10h5v4H5zM11 9.500h6V14h-6zM5 15h5v4l-5-.500zM11 15h6v5l-6-.700z" fill="#010307" /></svg>
      </TaskButton>
      <TaskButton label="Firefox" className="relative">
        <svg viewBox="0 0 24 24" className="size-6"><circle cx="12" cy="12" r="11" fill="#e8701c" /><circle cx="14" cy="10" r="8" fill="#2b64ac" /><path d="M12 2q8-1 9 7-3-5-9-7z" fill="#52b8ea" /><path d="M2 5q0 3 1 4 4-3 7 0-2 1-1 3l4 1q-2 4-6 2 6 7 13 1 3-4 2-8 3 7-3 12-7 6-14 0Q-1 14 2 5z" fill="#f39a20" /><path d="M4 7q3-2 5 1l-4 4z" fill="#ffc540" /></svg>
        <span className="absolute inset-x-1 bottom-0 h-0.5 bg-[#76b9ed]" />
      </TaskButton>
      <TaskButton label="TurboCAD" className="relative bg-[#36383b]">
        <Badge className="size-6" />
        <span className="absolute inset-x-0 bottom-0 h-0.5 bg-[#76b9ed]" />
      </TaskButton>
    </div>
    <div className="ml-auto flex items-center gap-2">
      <svg viewBox="0 0 12 8" className="h-2 w-3" fill="none" stroke="#fff" strokeWidth="1.300"><path d="M.500 7L6 1.500 11.500 7" /></svg>
      <svg viewBox="0 0 18 14" className="ml-1 h-3.5 w-[18px]" fill="none" stroke="#fff"><path d="M6.500 3.500h9v8h-9V8M15.500 6h1.500v3h-1.500M1 3h5v3q-2.500 3-5 0zM2.500 3V0M4.500 3V0M3.500 8v4.500H6" /><path d="M8 5h4v5H8z" fill="#fff" /></svg>
      <svg viewBox="0 0 14 14" className="ml-1 size-3.5" fill="none" stroke="#fff" strokeWidth="1.300"><path d="M1 13Q1 2 13 2" stroke="#888" /><path d="M4 13q1-8 9-8M7 13q1-5 6-5" /><path d="M10 13v-2h3v2z" fill="#fff" /></svg>
      <svg viewBox="0 0 16 14" className="h-3.5 w-4" fill="none" stroke="#fff"><path d="M.500 4.500H3l3.500-3v11L3 9.500H.500zM9 5q1.500 2 0 4M11 3q3 4 0 8" /><path d="M13 1q4 6 0 12" stroke="#999" /></svg>
      <svg viewBox="0 0 16 16" className="ml-px size-4" fill="none" stroke="#fff" strokeWidth="1.200"><path d="M1 1h14v11H9.500L7.500 14.500V12H1zM3.500 4h9M3.500 6.500h9M3.500 9h6" /></svg>
      <div className="mr-[3px] ml-1.5 pb-0.5 text-center font-['Open_Sans',sans-serif] text-[11px] leading-[17px]">
        <div>15:06</div>
        <div>28.01.2016</div>
      </div>
      <span className="mr-[3px] h-10 border-l border-[#555]" />
    </div>
  </footer>
);

const App = () => {
  const [offset, setOffset] = useState("1 mm");

  return (
    <div className="relative flex min-h-screen flex-col overflow-hidden bg-[#fdfdfd] font-['Noto_Sans',sans-serif] text-[11px] text-black">
      <header className="flex h-6 items-center border-b border-[#f0f0f0] pl-0.5">
        <Badge className="size-4" />
        <h1 className="ml-[5px] font-['Roboto',sans-serif] text-[12px]">TurboCAD 2015 Deluxe 64-bit - [Rysunek2 Globalny Rzut z Góry]</h1>
        <div className="ml-auto flex">
          <button type="button" aria-label="Minimalizuj" className="flex h-5 w-[45px] items-center justify-center">
            <svg viewBox="0 0 10 10" className="size-2.5" stroke="#000"><path d="M0 3.500h10" /></svg>
          </button>
          <button type="button" aria-label="Przywróć" className="flex h-5 w-[45px] items-center justify-center">
            <svg viewBox="0 0 10 10" className="size-2.5" stroke="#000" fill="none"><path d="M.500 2.500h7v7h-7zM2.500 2.500v-2h7v7h-2" /></svg>
          </button>
          <button type="button" aria-label="Zamknij" className="mr-px flex h-5 w-12 items-center justify-center">
            <svg viewBox="0 0 10 10" className="size-2.5" stroke="#000"><path d="M0 0l10 10M10 0L0 10" /></svg>
          </button>
        </div>
      </header>

      <nav className="flex h-6 items-center border-b border-[#a9a9a9] pr-0.5">
        <span className="mr-1 ml-1 h-[22px] border-l-2 border-dotted border-[#b4b4b4]" />
        <div className="flex gap-px">
          {menus.map((menu) => (
            <button key={menu} type="button" className="px-2">{menu}</button>
          ))}
        </div>
        <div className="ml-auto flex gap-[2px]">
          {["M1 8.500h6", "M1 4.500h5v4H1zM3.500 4V1.500h5v4H6", "M1.500 1.500l6 6M7.500 1.500l-6 6"].map((d, i) => (
            <button key={d} type="button" aria-label={["Minimalizuj okno", "Przywróć okno", "Zamknij okno"][i]} className="flex size-[14px] items-center justify-center border border-[#e3e3e3]">
              <svg viewBox="0 0 9 10" className="h-2.5 w-[9px]" fill="none" stroke="#6d7783" strokeWidth={i === 1 ? 1.5 : 2}><path d={d} /></svg>
            </button>
          ))}
        </div>
      </nav>

      <div className="flex gap-px">
        <ToolBar>
          <Tools items={standardBar} active="noSnap" />
          <Combo label="Warstwa" className="w-[302px]" />
          <ToolButton id="help*" />
        </ToolBar>
      </div>
      <div className="flex gap-px">
        <ToolBar><Tools items={planeBar} /></ToolBar>
      </div>
      <div className="flex gap-px">
        <ToolBar><Tools items={booleanBar} /></ToolBar>
        <ToolBar><Tools items={viewBar} /></ToolBar>
        <ToolBar><Tools items={copyBar} /></ToolBar>
      </div>
      <div className="flex gap-px">
        <ToolBar><Tools items={solidBar} /></ToolBar>
        <ToolBar><Tools items={shapeBar} /></ToolBar>
        <ToolBar><Tools items={["addressBook", "mailUp"]} /></ToolBar>
      </div>
      <div className="flex gap-px">
        <ToolBar>
          <Tools items={["gear", "sheets"]} />
          <Combo label="Warstwa obiektu" className="w-[297px]" />
          <Combo label="Kolor" className="w-[100px]" />
          <Combo label="Styl linii" className="w-[100px]" />
          <Combo label="Szerokość" className="w-[100px]" muted />
          <Combo label="Pióro" className="w-[118px]" />
          <Combo label="Skala linii" className="w-[100px]" />
          <Tools items={["|"]} />
          <Combo label="Pędzel" className="w-[100px]" />
          <Combo label="Wypełnienie" className="w-[100px]" muted />
          <Tools items={["pencil", "cup*"]} active="cup" />
        </ToolBar>
      </div>

      <main className="flex flex-1 border-t border-[#a0a0a0] bg-[#f0f0f0]">
        <div role="toolbar" className="w-[35px] border-r-2 border-[#a0a0a0] pl-0.5">
          <div className="mt-1 mr-0.5 mb-[3px] border-t-2 border-dotted border-[#b4b4b4]" />
          <Tools items={leftBar} active="parallel" vertical />
        </div>

        <div className="flex w-[15px] flex-col font-['Liberation_Sans',sans-serif]">
          <div className="h-4 bg-[#c4c4b6]">
            <svg viewBox="0 0 15 16" className="h-4 w-[15px]" fill="none" stroke="#000"><path d="M4.500 4v8h8M2.500 5.500l2-3 2 3M10.500 9.500l3 2.500-3 2.500" /></svg>
          </div>
          <VerticalRuler />
        </div>

        <div className="flex min-w-0 flex-1 flex-col">
          <div className="font-['Liberation_Sans',sans-serif]"><HorizontalRuler /></div>
          <div className="flex flex-1">
            <div className="relative flex-1 border-t-2 border-r-2 border-b-2 border-l-2 border-[#dcdcdc] border-t-[#808080] border-l-[#808080] bg-white">
              <Drawing />
              <table className="absolute top-[6px] right-5 font-['Liberation_Sans',sans-serif] text-[16px] leading-[23px]">
                <tbody>
                  {stats.map(([label, value]) => (
                    <tr key={label}>
                      <td className="pr-[6px] text-right">{label}</td>
                      <td>{value}</td>
                    </tr>
                  ))}
                </tbody>
              </table>
            </div>
            <div className="flex w-[18px] flex-col items-center py-1">
              <Chevron className="" />
              <div className="grow-[115] basis-0" />
              <div className="h-[45px] w-[15px] bg-[#cdcdcd]" />
              <div className="grow-[215] basis-0" />
              <Chevron className="rotate-180" />
            </div>
          </div>
          <div className="flex h-5">
            <div className="flex w-[177px] items-start border-r border-[#808080] pl-2">
              <div role="tablist" className="flex flex-1 items-start pr-1">
                <button role="tab" aria-selected="true" type="button" className="flex h-[19px] items-center gap-1 border-r-2 border-b border-black pr-[7px] pl-1.5 font-bold">
                  <svg viewBox="0 0 13 13" className="size-[13px]" fill="#fff" stroke="#000"><path d="M1 4l3-3 4 1v5L4 9 1 7zM1 4l4 1v4M5 5l3-3" /><circle cx="8" cy="8" r="3.500" /><path d="M7 7h5v5H7z" fill="#555" /></svg>
                  Model
                </button>
                <button role="tab" aria-selected="false" type="button" className="flex h-[18px] items-center gap-1 border border-[#b5b5b5] bg-[#dfdfdf] pr-2 pl-1.5 text-[#888]">
                  <svg viewBox="0 0 12 13" className="h-[13px] w-3" fill="#fff" stroke="#000"><path d="M1.500 1.500h6l3 3v7h-9zM7.500 1.500v3h3M6 6v4" /></svg>
                  Arkusz 1
                </button>
                <span className="flex-1 border-t border-[#888]" />
              </div>
            </div>
            <div className="flex flex-1 items-center pr-[20px] pl-[3px]">
              <Chevron className="-rotate-90" />
              <div className="grow-[380] basis-0" />
              <div className="h-[15px] w-[151px] bg-[#cdcdcd]" />
              <div className="grow-[528] basis-0" />
              <Chevron className="rotate-90" />
            </div>
          </div>
        </div>

        <div role="toolbar" className="w-[34px] border-r border-b border-[#a0a0a0] pl-0.5">
          <div className="mt-1 mb-[3px] border-t-2 border-dotted border-[#b4b4b4]" />
          <Tools items={rightBar} vertical />
        </div>
      </main>

      <section className="flex h-[42px] items-center border-b border-[#a9a9a9] bg-[#f0f0f0]">
        <span className="ml-1 h-[38px] border-l-2 border-dotted border-[#b4b4b4]" />
        <button type="button" aria-label="Anuluj" className="ml-0.5 flex size-6 items-center justify-center">
          <svg viewBox="0 0 12 12" className="size-3" stroke="#e8484c" strokeWidth="3"><path d="M1 1l10 10M11 1L1 11" /></svg>
        </button>
        <button type="button" aria-label="Właściwości" className="flex size-6 items-center justify-center">
          <svg viewBox="0 0 14 14" className="size-3.5" fill="#fff" stroke="#a0a0a0"><path d="M.500 .500h13v13H.500zM0 3.500h14M0 6.500h14M0 9.500h14M4.500 3v11M9.500 3v11" /></svg>
        </button>
        <div className="flex h-[29px] flex-col justify-center border-x border-[#808080] pr-0.5 pl-1">
          <label htmlFor="offset" className="flex items-center gap-[3px] leading-[14px]">
            <svg viewBox="0 0 8 10" className="h-2.5 w-2" fill="#8c1c20"><path d="M1 4h6v5H1z" /><path d="M2.500 5V2.500h3V5" fill="none" stroke="#8c1c20" strokeWidth="1.300" /></svg>
            Odstęp
          </label>
          <div className="flex w-[54px] border border-[#9cc4ec] bg-white px-[3px] py-px">
            <input id="offset" value={offset} onChange={(e) => setOffset(e.target.value)} className="h-3.5 w-8 bg-[#3393f5] leading-[14px] text-white" />
          </div>
        </div>
        <button type="button" aria-label="Zakończ" className="ml-2 flex h-6 items-center">
          <svg viewBox="0 0 14 14" className="size-3.5" stroke="#444" fill="#fff"><path d="M.500 .500h13v12H.500z" /><path d="M3 2h2v2H3zM7 2h2v2H7zM5 4h2v2H5zM9 4h2v2H9zM3 6h2v2H3zM7 6h2v2H7zM5 8h2v2H5zM9 8h2v2H9z" fill="#333" stroke="none" /></svg>
        </button>
      </section>

      <section className="flex h-[25px] items-center bg-[#f0f0f0]">
        <p className="pb-0.5 pl-[9px]">Określ linię do której utworzysz równoległą</p>
        <div className="ml-auto flex items-center">
          <button type="button" className="border-r border-[#d4d4d4] pr-1 pl-0.5 text-[#888]">PRZYCIĄGANIE</button>
          <button type="button" className="border-r border-[#d4d4d4] px-[5px]">GEO</button>
          <div className="mr-[5px] ml-4 flex gap-3">
            <Coordinate axis="X" value="-94.05 mm" />
            <Coordinate axis="Y" value="62.57 mm" />
            <Coordinate axis="Z" value="0 mm" muted />
          </div>
          <span className="w-[55px] border-l border-[#d4d4d4] pb-0.5 pl-0.5">203%</span>
          <span className="w-[61px] border-l border-[#d4d4d4] pb-0.5 pl-[3px]">15:06</span>
        </div>
      </section>

      <TaskBar />

      <svg viewBox="0 0 100 70" className="pointer-events-none absolute bottom-[41px] left-8 h-[70px] w-[100px]" fill="none" stroke="#e01e26" strokeWidth="5">
        <ellipse cx="50" cy="35" rx="47" ry="32" />
      </svg>
    </div>
  );
};

export default App;
